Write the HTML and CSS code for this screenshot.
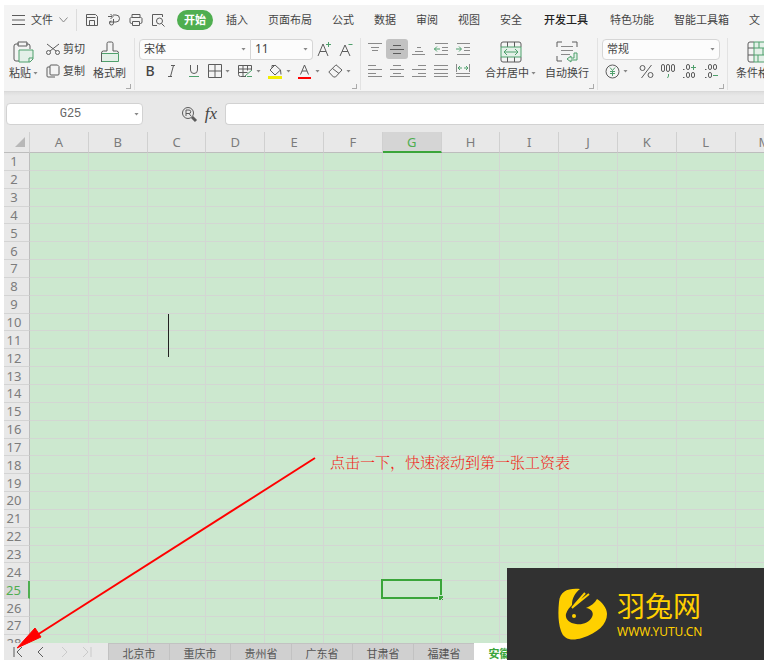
FILE: index.html
```html
<!DOCTYPE html>
<html lang="zh-CN">
<head>
<meta charset="utf-8">
<title>工资表</title>
<link rel="stylesheet" href="styles.css">
</head>
<body>
<div class="app">
  <header class="ribbon">
    <nav class="menu">
      <button class="file"><svg width="13" height="12" viewBox="0 0 13 12"><path d="M0 1.5h13M0 6h13M0 10.5h13"/></svg>文件<svg class="soft" width="9" height="6" viewBox="0 0 9 6"><path d="M.5.5l4 4.500 4-4.500"/></svg></button>
      <span class="quick">
        <button aria-label="保存"><svg width="14" height="14" viewBox="0 0 14 14"><path d="M1.500 1.500h9l2 2v9h-11zM1.500 4.500h9M4.500 12.500v-5h5v5"/></svg></button>
        <button aria-label="输出"><svg width="14" height="14" viewBox="0 0 14 14"><path d="M1 3.500h4M3.500 1l2.500 2.500L3.500 6M6 2h3a3.500 3.500 0 0 1 0 7H2M6.500 6v4a2 2 0 1 1-2-2"/></svg></button>
        <button aria-label="打印"><svg width="14" height="14" viewBox="0 0 14 14"><path d="M3 4V1.500h8V4M3 10.500h-.500a1.500 1.500 0 0 1-1.500-1.500v-3.500A1.500 1.500 0 0 1 2.500 4.500h9A1.500 1.500 0 0 1 13 5.500V9a1.500 1.500 0 0 1-1.500 1.500H11M3.500 8.500h7v4h-7z"/></svg></button>
        <button aria-label="打印预览"><svg width="14" height="14" viewBox="0 0 14 14"><path d="M6 12.500H1.500v-11h10V4"/><circle cx="8.500" cy="8" r="3"/><path d="M10.500 10.500L13.500 13.500"/></svg></button>
      </span>
      <button class="tab current">开始</button>
      <button class="tab">插入</button>
      <button class="tab">页面布局</button>
      <button class="tab">公式</button>
      <button class="tab">数据</button>
      <button class="tab">审阅</button>
      <button class="tab">视图</button>
      <button class="tab">安全</button>
      <button class="tab strong">开发工具</button>
      <button class="tab">特色功能</button>
      <button class="tab">智能工具箱</button>
      <button class="tab">文</button>
    </nav>
    <div class="tools">
      <section class="group clipboard">
        <button class="big"><svg width="22" height="22" viewBox="0 0 22 22"><path d="M6 3H3a2 2 0 0 0-2 2v13a2 2 0 0 0 2 2h3M13 3h2a2 2 0 0 1 2 2v3M5 1h9v4H5z"/><path class="green tint" d="M6 9h14v9l-3 3H6zM20 17h-4v4"/></svg><span>粘贴<i class="caret"></i></span></button>
        <div class="stack">
          <button class="row"><svg width="14" height="14" viewBox="0 0 14 14"><path d="M1 2l9 7M13 2L4 9"/><circle cx="2.500" cy="10.500" r="2"/><circle cx="11.500" cy="10.500" r="2"/></svg>剪切</button>
          <button class="row"><svg width="14" height="14" viewBox="0 0 14 14"><path d="M5 1h6.500l1.500 1.500V10a1 1 0 0 1-1 1H5a1 1 0 0 1-1-1V2a1 1 0 0 1 1-1zM4 3H2a1 1 0 0 0-1 1v8a1 1 0 0 0 1 1h7"/></svg>复制</button>
        </div>
        <button class="big"><svg width="20" height="22" viewBox="0 0 20 22"><path class="green tint" d="M1.500 12.500h17v8h-17z"/><path d="M1.500 21v-9a2 2 0 0 1 2-2H7V2.500A1.500 1.500 0 0 1 8.500 1h3A1.500 1.500 0 0 1 13 2.500V10h3.500a2 2 0 0 1 2 2"/></svg><span>格式刷</span></button>
        <i class="corner"></i>
      </section>
      <section class="group font">
        <div class="line">
          <span class="combo face"><select aria-label="字体"><option>宋体</option></select><i class="caret"></i></span>
          <span class="combo size"><select aria-label="字号"><option>11</option></select><i class="caret"></i></span>
          <button class="icon" aria-label="增大字号"><svg width="14" height="16" viewBox="0 0 14 16"><path d="M1 15L6 3l5 12M3 10.500h6"/><path class="green" d="M9 3.500h5M11.500 1v5"/></svg></button>
          <button class="icon" aria-label="减小字号"><svg width="14" height="16" viewBox="0 0 14 16"><path d="M1 15L6 4l5 11M3 10.500h6"/><path class="green" d="M9.500 3.500h4"/></svg></button>
        </div>
        <div class="line marks">
          <button class="icon bold">B</button>
          <button class="icon" aria-label="斜体"><svg width="12" height="14" viewBox="0 0 12 14"><path d="M5 1.500h4M2 12.500h4M7.500 1.500l-3 11"/></svg></button>
          <button class="icon under" aria-label="下划线"><svg width="12" height="14" viewBox="0 0 12 14"><path d="M2.500 1v5a3.500 3.500 0 0 0 7 0V1"/><path class="green" d="M1 12.500h10"/></svg></button>
          <span class="drops">
            <button class="drop" aria-label="边框"><svg width="14" height="14" viewBox="0 0 14 14"><path d="M.5.5h13v13H.5zM7 .5v13M.5 7h13"/></svg><i class="caret"></i></button>
            <button class="drop" aria-label="表格样式"><svg width="15" height="14" viewBox="0 0 15 14"><path d="M8 12.500H2.500a2 2 0 0 1-2-2v-9h13V6M.5 5h13M.5 8.500h9M5 1.500v11M9.500 1.500v5"/><path class="green" d="M7 12l7-6M9 12.500h5"/></svg><i class="caret"></i></button>
            <button class="drop" aria-label="填充颜色"><svg width="15" height="15" viewBox="0 0 15 15"><path d="M2 6l5-5 5.500 5L7 11zM4 4V1.500h3M12.500 6l.5 4.500"/><path class="yellow" d="M0 13.500h14"/></svg><i class="caret"></i></button>
            <button class="drop" aria-label="字体颜色"><svg width="14" height="15" viewBox="0 0 14 15"><path d="M2.500 10.500L6.500 1l4 9.500M4 7h5"/><path class="red" d="M0 14h13"/></svg><i class="caret"></i></button>
            <button class="drop" aria-label="清除"><svg width="15" height="14" viewBox="0 0 15 14"><path d="M.8 8L8 .8 14 6l-6.500 7H5.500zM4.500 4.500L11 9.500"/></svg><i class="caret"></i></button>
          </span>
        </div>
        <i class="corner"></i>
      </section>
      <section class="group align">
        <div class="stack">
          <div class="line">
            <button class="icon" aria-label="顶端对齐"><svg class="soft" width="14" height="14" viewBox="0 0 14 14"><path d="M0 1.500h14M3 5.500h8M4 8.500h6"/></svg></button>
            <button class="icon pressed" aria-label="垂直居中"><svg width="14" height="14" viewBox="0 0 14 14"><path d="M3 3.500h8M0 7.500h14M3 11.500h8"/></svg></button>
            <button class="icon" aria-label="底端对齐"><svg class="soft" width="14" height="14" viewBox="0 0 14 14"><path d="M5 5.500h4M3 9.500h8M0 12.500h13"/></svg></button>
            <button class="icon" aria-label="减少缩进"><svg class="soft" width="14" height="14" viewBox="0 0 14 14"><path d="M1 1.500h13M8 5.500h6M8 8.500h6M1 12.500h13"/><path class="green" d="M6 7H0M3 4.500L.5 7 3 9.500"/></svg></button>
            <button class="icon" aria-label="增加缩进"><svg class="soft" width="14" height="14" viewBox="0 0 14 14"><path d="M1 1.500h13M8 5.500h6M8 8.500h6M1 12.500h13"/><path class="green" d="M0 7h5M3 4.500L5.500 7 3 9.500"/></svg></button>
          </div>
          <div class="line">
            <button class="icon" aria-label="左对齐"><svg class="soft" width="14" height="14" viewBox="0 0 14 14"><path d="M0 1.500h8M0 5.500h14M0 9.500h8M0 12.500h14"/></svg></button>
            <button class="icon" aria-label="居中"><svg class="soft" width="14" height="14" viewBox="0 0 14 14"><path d="M3 1.500h8M0 5.500h14M3 9.500h8M0 12.500h14"/></svg></button>
            <button class="icon" aria-label="右对齐"><svg class="soft" width="14" height="14" viewBox="0 0 14 14"><path d="M6 1.500h8M0 5.500h14M6 9.500h8M0 12.500h14"/></svg></button>
            <button class="icon" aria-label="两端对齐"><svg class="soft" width="14" height="14" viewBox="0 0 14 14"><path d="M0 1.500h14M0 5.500h14M0 9.500h14M0 12.500h14"/></svg></button>
            <button class="icon" aria-label="分散对齐"><svg class="soft" width="14" height="14" viewBox="0 0 14 14"><path d="M.5 0v8M13.500 0v8M0 9.500h14M0 12.500h14"/><path class="green" d="M2 4h4M4 2L2 4l2 2M8 4h4M10 2l2 2-2 2"/></svg></button>
          </div>
        </div>
        <button class="big"><svg width="22" height="22" viewBox="0 0 22 22"><path d="M1 6V3a2 2 0 0 1 2-2h16a2 2 0 0 1 2 2v3M1 16v3a2 2 0 0 0 2 2h16a2 2 0 0 0 2-2v-3M7.500 1v5M14.500 1v5M7.500 16v5M14.500 16v5"/><path class="green tint" d="M1 6h20v10H1z"/><path class="green" d="M4 11h14M7 8l-3 3 3 3M15 8l3 3-3 3"/></svg><span>合并居中<i class="caret"></i></span></button>
        <button class="big"><svg width="22" height="22" viewBox="0 0 22 22"><path d="M1 6V1h5M16 1h5v5M1 15v5h5"/><path class="soft" d="M5 5.500h12M5 9.500h12M5 13.500h9"/><path class="green tint" d="M18 12h3v7h-6v2l-4-3 4-3v2h3z"/></svg><span>自动换行</span></button>
        <i class="corner"></i>
      </section>
      <section class="group number">
        <div class="line"><span class="combo format"><select aria-label="数字格式"><option>常规</option></select><i class="caret"></i></span></div>
        <div class="line formats">
          <button class="drop" aria-label="货币"><svg width="15" height="15" viewBox="0 0 15 15"><circle cx="7.500" cy="7.500" r="6.500"/><path class="green" d="M5 3.500l2.500 3 2.500-3M7.500 6.500V12M5 7.500h5M5 9.500h5"/></svg><i class="caret"></i></button>
          <button class="icon" aria-label="百分比"><svg width="15" height="15" viewBox="0 0 15 15"><circle cx="3.500" cy="4" r="2.500"/><circle cx="11.500" cy="11" r="2.500"/><path d="M12.500 1l-10 13"/></svg></button>
          <button class="icon" aria-label="千位分隔"><svg width="14" height="15" viewBox="0 0 14 15"><rect x=".5" y=".5" width="3" height="7" rx="1.500"/><rect x="5.500" y=".5" width="3" height="7" rx="1.500"/><rect x="10.500" y=".5" width="3" height="7" rx="1.500"/><path class="green" d="M7.500 10v2l-1 2"/></svg></button>
          <button class="icon" aria-label="增加小数位"><svg width="14" height="15" viewBox="0 0 14 15"><rect x="3.500" y=".5" width="3" height="5" rx="1.500"/><rect x="3.500" y="8.500" width="3" height="5" rx="1.500"/><rect x="8.500" y="8.500" width="3" height="5" rx="1.500"/><path d="M0 5.500h1.500M0 13.500h1.500"/><path class="green" d="M8 3.500h5M10.500 1v5"/></svg></button>
          <button class="icon" aria-label="减少小数位"><svg width="14" height="15" viewBox="0 0 14 15"><rect x="3.500" y=".5" width="3" height="5" rx="1.500"/><rect x="8.500" y=".5" width="3" height="5" rx="1.500"/><rect x="3.500" y="8.500" width="3" height="5" rx="1.500"/><path d="M0 5.500h1.500M0 13.500h1.500"/><path class="green" d="M8 11.500h5"/></svg></button>
        </div>
        <i class="corner"></i>
      </section>
      <section class="group styles">
        <button class="big"><svg width="22" height="22" viewBox="0 0 22 22"><path d="M7 1H3a2 2 0 0 0-2 2v16a2 2 0 0 0 2 2h4M1 7h6M1 14h6"/><path class="green tint" d="M7 1h14v20H7zM7 7h14M7 14h14M12 1v6M16 7v7M11 14v7"/></svg><span>条件格式</span></button>
      </section>
    </div>
  </header>

  <div class="formula">
    <span class="name"><input aria-label="名称框" value="G25"><i class="caret"></i></span>
    <button class="find" aria-label="查找"><svg width="17" height="17" viewBox="0 0 17 17"><circle cx="7" cy="7" r="5.500"/><path d="M5 10V4h3a1.500 1.500 0 0 1 0 3.500H5M8 7.500l2 2.500"/><path class="thick" d="M11 11l4 4"/></svg></button>
    <button class="fx">fx</button>
    <input class="entry" aria-label="编辑栏">
  </div>

  <main class="sheet"><table class="grid"><thead></thead><tbody></tbody></table></main>

  <footer class="sheets">
    <div class="arrows">
      <button aria-label="第一张"><svg width="10" height="12" viewBox="0 0 10 12"><path d="M1 1v10M9 1L4 6l5 5"/></svg></button>
      <button aria-label="上一张"><svg width="10" height="12" viewBox="0 0 10 12"><path d="M7 1L2 6l5 5"/></svg></button>
      <button class="off" aria-label="下一张"><svg width="10" height="12" viewBox="0 0 10 12"><path d="M3 1l5 5-5 5"/></svg></button>
      <button class="off" aria-label="最后一张"><svg width="10" height="12" viewBox="0 0 10 12"><path d="M1 1l5 5-5 5M9 1v10"/></svg></button>
    </div>
    <button class="page">北京市</button><button class="page">重庆市</button><button class="page">贵州省</button><button class="page">广东省</button><button class="page">甘肃省</button><button class="page">福建省</button><button class="page active">安徽省</button>
  </footer>

  <svg class="pointer" width="300" height="194" viewBox="0 0 300 194"><path class="shaft" d="M298 2L20 179"/><path class="head" d="M0 192l18-20 6 9z"/></svg>
  <p class="note">点击一下，快速滚动到第一张工资表</p>
  <i class="cursor"></i>
  <aside class="brand">
    <svg width="50" height="52" viewBox="0 0 50 52">
      <path class="fill" d="M22 1C10 0 2 3 1 14C0 24 0 34 3 43C6 52 14 53 24 50C40 45 49 36 49 26C49 20 44 14 39 11C37 15 33 18 28 20C34 21 36 25 34 29C31 35 24 37 18 36C11 35 7 31 8 26C9 22 12 19 14 17C14 10 17 5 22 1z"/>
      <path class="ear" d="M14 20L27 5M15 19L31 6"/>
      <circle class="fill" cx="16" cy="28" r="2"/>
    </svg>
    <div><strong>羽兔网</strong><small>WWW.YUTU.CN</small></div>
  </aside>
</div>
<script src="grid.js"></script>
</body>
</html>
```
FILE: styles.css
```css
* { box-sizing: border-box; }
body { margin: 0; background: #fff; color: #444; font: 11px/16px "Noto Sans", "Noto Sans CJK SC", sans-serif; }
button, input, select { margin: 0; padding: 0; border: 0; background: none; color: inherit; font: inherit; }
button { display: flex; align-items: center; justify-content: center; flex: none; white-space: nowrap; }
svg { display: block; flex: none; fill: none; stroke: #5c5c5c; stroke-width: 1; }
svg.soft, svg .soft { stroke: #8a8a8a; }
svg .green { stroke: #4fa06c; }
svg .tint { fill: #e4f0e8; }
svg .yellow { stroke: #f2ee00; stroke-width: 3; }
svg .red { stroke: #f00; stroke-width: 2; }
svg .thick { stroke-width: 3; }
.app { position: relative; display: flex; flex-direction: column; height: 100vh; padding: 5px 0 0 4px; overflow: hidden; }

.ribbon { flex: none; overflow: hidden; background: #f4f4f4; border-bottom: 1px solid #d9d9d9; }
.menu { display: flex; align-items: center; height: 30px; gap: 20px; padding-left: 8px; }
.menu > * { flex: none; }
.file { gap: 6px; height: 22px; padding-right: 8px; border-right: 1px solid #dcdcdc; }
.quick { display: flex; gap: 8px; margin: 0 -1px 0 -12px; }
.tab.current { height: 20px; margin: 0 -7px; padding: 0 7px; border-radius: 10px; background: #4fae50; color: #fff; font-weight: 700; }
.tab.strong { margin: 0 2px; color: #222; font-weight: 500; }
.tools { display: flex; height: 56px; padding-top: 3px; }
.group { position: relative; flex: none; height: 52px; border-right: 1px solid #e2e2e2; }
.clipboard { display: flex; gap: 8px; padding: 0 8px 0 5px; }
.align { display: flex; padding: 0 8px 0 3px; }
.font { width: 226px; padding-left: 4px; }
.number { padding: 0 4px; }
.styles { padding-left: 8px; border: 0; }
.big { flex-direction: column; justify-content: flex-start; gap: 2px; padding-top: 3px; }
.big span { display: flex; align-items: center; gap: 2px; }
.align .big { margin-left: 9px; }
.align .stack + .big { margin-left: 11px; }
.row { height: 22px; gap: 3px; }
.line { display: flex; align-items: center; height: 22px; }
.icon { width: 22px; height: 22px; }
.pressed { height: 20px; border-radius: 3px; background: #c2c2c2; }
.bold { font-size: 14px; font-weight: 500; }
.drops { display: flex; padding-left: 3px; }
.drop { width: 30px; height: 22px; gap: 3px; justify-content: flex-start; }
.formats { padding-left: 3px; }
.caret { flex: none; width: 5px; height: 3px; background: #888; clip-path: polygon(0 0, 100% 0, 50% 100%); }
.corner { position: absolute; right: 3px; bottom: 1px; width: 5px; height: 5px; border: solid #aaa; border-width: 0 1px 1px 0; }
.combo { display: flex; flex: none; align-items: center; height: 21px; padding: 0 4px; border: 1px solid #d6d6d6; background: #fcfcfc; }
.combo select { flex: 1; min-width: 0; appearance: none; }
.face { width: 112px; border-radius: 4px 0 0 4px; }
.size { width: 62px; border-left: 0; border-radius: 0 4px 4px 0; font-size: 12px; }
.format { width: 118px; border-radius: 4px; }

.formula { display: flex; flex: none; align-items: center; height: 40px; padding: 4px 0 0 2px; background: linear-gradient(#dedede, #e8e8e8 4px); }
.name { display: flex; align-items: center; width: 137px; height: 22px; padding-right: 3px; border: 1px solid #d2d2d2; border-radius: 4px; background: #fff; }
.name input { flex: 1; min-width: 0; height: 20px; text-align: center; font: 12px/20px "Liberation Mono", monospace; color: #666; }
.find { margin-left: 38px; }
.fx { width: 26px; margin-right: 1px; font: italic 17px "Liberation Serif", serif; }
.entry { flex: 1; min-width: 0; height: 22px; border: 1px solid #d2d2d2; border-right: 0; border-radius: 4px 0 0 4px; background: #fff; }

.sheet { flex: 1; min-height: 0; overflow: hidden; background: #cce8cf; }
.grid { width: 104%; height: 521px; table-layout: fixed; border-collapse: separate; border-spacing: 0; color: #7c7c7c; font-size: 13px; line-height: 16px; }
.grid th { padding: 0; background: #e8e8e8; font-weight: 400; }
.grid thead th { height: 21px; border-right: 1px solid #d0d0d0; border-bottom: 1px solid #bdbdbd; }
.grid thead th:first-child { width: 26px; }
.grid thead th.on { background: #d5d5d5; border-bottom: 2px solid #3aa53a; color: #4fae50; }
.grid tbody th { padding-right: 5px; border-right: 1px solid #bdbdbd; border-bottom: 1px solid #d4d4d4; }
.grid tbody th.on { background: #d9d9d9; border-right: 2px solid #4fae50; color: #4fae50; }
.grid td { position: relative; padding: 0; border-right: 1px solid #d3d6d3; border-bottom: 1px solid #d3d6d3; }
.all { display: block; width: 10px; height: 10px; margin-left: 11px; background: #b8b8b8; clip-path: polygon(100% 0, 100% 100%, 0 100%); }
.pick { position: absolute; inset: -2px -1px -1px -2px; border: 2px solid #3aa53a; }
.pick::after { content: ""; position: absolute; right: -3px; bottom: -3px; width: 4px; height: 4px; background: #3aa53a; box-shadow: 0 0 0 1px #cce8cf; }

.sheets { display: flex; flex: none; height: 17px; overflow: hidden; background: #e8e8e8; }
.arrows { display: flex; flex: none; gap: 13px; width: 104px; padding-left: 9px; }
.arrows .off { opacity: .2; }
.page { width: 61px; height: 20px; border: solid #c2c2c2; border-width: 1px 0 0 1px; background: #d0d0d0; color: #555; }
.page.active { background: #fff; border-color: #fff; color: #3aa53a; font-weight: 700; }

.pointer { position: absolute; left: 17px; top: 456px; }
.pointer .shaft { stroke: #f00; stroke-width: 2; }
.pointer .head { fill: #f00; stroke: #f00; }
.note { position: absolute; left: 330px; top: 453px; margin: 0; color: #f0281c; font: 15px/20px "Liberation Serif", "Noto Serif CJK SC", "Noto Sans CJK SC", serif; font-weight: 300; white-space: nowrap; }
.cursor { position: absolute; left: 168px; top: 314px; width: 1px; height: 43px; background: #222; }
.brand { position: absolute; right: 0; bottom: 0; display: flex; gap: 9px; width: 257px; height: 92px; padding: 20px 0 0 51px; background: #313131; color: #ffd000; }
.brand .fill { fill: #ffd000; stroke: none; }
.brand .ear { stroke: #ffd000; stroke-width: 2; }
.brand strong { display: block; font-size: 28px; line-height: 36px; font-weight: 400; }
.brand small { display: block; font-size: 12px; line-height: 16px; }
```
FILE: grid.js
```js
const columns = [..."ABCDEFGHIJKLM"];
const head = document.querySelector(".grid thead");
const body = document.querySelector(".grid tbody");

head.innerHTML = '<tr><th><i class="all"></i></th>' +
  columns.map(c => `<th class="${c === "G" ? "on" : ""}">${c}</th>`).join("") + "</tr>";

for (let r = 1; r <= 28; r++) {
  const cells = columns.map(c => r === 25 && c === "G" ? '<td><i class="pick"></i></td>' : "<td></td>");
  body.insertAdjacentHTML("beforeend", `<tr><th class="${r === 25 ? "on" : ""}">${r}</th>${cells.join("")}</tr>`);
}
```
